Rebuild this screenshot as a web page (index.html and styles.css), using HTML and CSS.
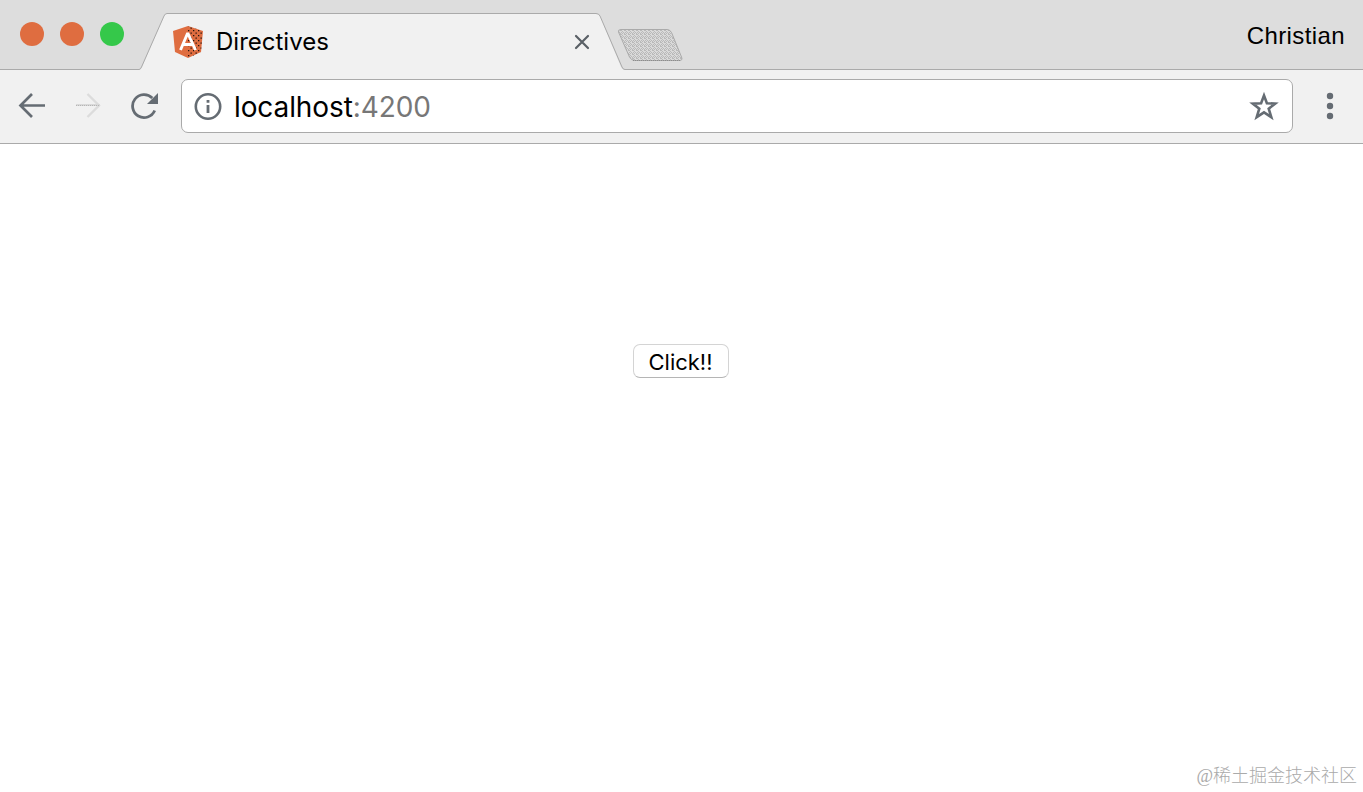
FILE: index.html
```html
<!DOCTYPE html>
<html lang="en">
<head>
    <meta charset="UTF-8">
    <title>Directives</title>
    <link rel="stylesheet" href="styles.css">
</head>
<body>
    <div class="tab-strip">
        <div class="window-buttons">
            <span class="dot"></span>
            <span class="dot"></span>
            <span class="dot green"></span>
        </div>
        <div class="tab">
            <svg class="tab-shape" width="486" height="58" viewBox="0 0 486 58">
                <path d="M0 56.5 Q2 56.5 3 54 L25 3 Q26 .5 28 .5 H456 Q459 .5 461 3 L482 54 Q483 56.5 486 56.5 V58 H0Z" fill="#f1f1f1"/>
                <path d="M0 56.5 Q1.500 56.500 2.500 54 L25 3 Q26 .5 28 .5 H457 Q460 .5 461 3 L483 54 Q484 56.5 486 56.5" fill="none" stroke="#aaa"/>
            </svg>
            <svg class="favicon" width="32" height="34" viewBox="0 0 32 34">
                <defs>
                    <pattern id="specks" width="5" height="5" patternUnits="userSpaceOnUse">
                        <path d="M1 0h1.300v1.300H1zM3.500 2.500h1.300v1.300H3.500z" fill="#26140e"/>
                    </pattern>
                </defs>
                <path d="M16 1 L31 6 L29 27 L16 33 L3 27 L1 6Z" fill="#df6d40"/>
                <path d="M16 1 L31 6 L29 27 L16 33Z" fill="url(#specks)"/>
                <path d="M8.500 25 L15.700 8 L23.500 25 M11.500 19.500 H20.500" fill="none" stroke="#fff" stroke-width="2.900" stroke-linejoin="bevel"/>
            </svg>
            <span class="tab-title">Directives</span>
            <svg class="close" width="16" height="16" viewBox="0 0 16 16">
                <path d="M2 2 L14 14 M14 2 L2 14" stroke="#5a6066" stroke-width="2.200" stroke-linecap="round"/>
            </svg>
        </div>
        <svg class="new-tab" width="68" height="34" viewBox="0 0 68 34">
            <defs>
                <pattern id="mesh" width="4" height="4" patternUnits="userSpaceOnUse">
                    <path d="M0 0h1v1H0zM2 0h1v1H2zM1 1h1v1H1zM0 2h1v1H0zM3 2h1v1H3zM1 3h1v1H1zM3 1h1v1H3z" fill="#b9b9b9"/>
                </pattern>
            </defs>
            <path d="M4 1.500 H50 Q53 1.500 54.500 4.500 L64.500 29 Q66 32.500 62.500 32.500 H18 Q14 32.500 12.500 29 L1.500 4 Q.8 1.500 4 1.500Z" fill="#dadada"/>
            <path d="M4 1.500 H50 Q53 1.500 54.500 4.500 L64.500 29 Q66 32.500 62.500 32.500 H18 Q14 32.500 12.500 29 L1.500 4 Q.8 1.500 4 1.500Z" fill="url(#mesh)" stroke="#aaa"/>
            <path d="M16 32.500 H63" stroke="#8c8c8c" stroke-dasharray="1 1"/>
        </svg>
        <span class="profile">Christian</span>
    </div>

    <div class="toolbar">
        <svg class="nav-icon" width="28" height="28" viewBox="0 0 28 28">
            <path d="M27 13.500 H3 M14 2 L2.500 13.500 L14 25" fill="none" stroke="#656c73" stroke-width="2.700"/>
        </svg>
        <svg class="nav-icon" width="28" height="28" viewBox="0 0 28 28">
            <path d="M13.500 2 L25 13.500 L13.500 25" fill="none" stroke="#dcdcdc" stroke-width="2.400"/>
            <path d="M2 13 H26" stroke="#d9d9d9" stroke-width="2"/>
            <path d="M2 13.500 H26" stroke="#b5b5b5" stroke-dasharray="1 1"/>
        </svg>
        <svg class="nav-icon" width="28" height="28" viewBox="0 0 28 28">
            <path d="M22.300 6 A11.500 11.500 0 1 0 24.700 18.500" fill="none" stroke="#656c73" stroke-width="2.800"/>
            <path d="M28 1 V12 H17Z" fill="#656c73"/>
        </svg>
        <div class="address-bar">
            <svg width="28" height="28" viewBox="0 0 28 28">
                <circle cx="14" cy="14.500" r="12.200" fill="none" stroke="#656c73" stroke-width="2.600"/>
                <path d="M12.600 8h2.800v2.800h-2.800zM12.600 13h2.800v8h-2.800z" fill="#656c73"/>
            </svg>
            <span class="url">localhost<span class="port">:4200</span></span>
            <svg class="star" width="30" height="30" viewBox="0 0 30 30">
                <path d="M15 4.500 L17.900 12.300 L26.200 12.600 L19.700 17.700 L22.300 26.200 L15 21.400 L7.700 26.200 L10.300 17.700 L3.800 12.600 L12.100 12.300Z" fill="none" stroke="#656c73" stroke-width="2.600"/>
            </svg>
        </div>
        <svg class="menu" width="8" height="28" viewBox="0 0 8 28">
            <g fill="#656c73">
                <circle cx="4" cy="4" r="3.200"/>
                <circle cx="4" cy="14" r="3.200"/>
                <circle cx="4" cy="24" r="3.200"/>
            </g>
        </svg>
    </div>

    <main class="page">
        <button class="click-button" type="button">Click!!</button>
        <span class="watermark">@稀土掘金技术社区</span>
    </main>
</body>
</html>
```
FILE: styles.css
```css
* {
    box-sizing: border-box;
}
body {
    margin: 0;
    height: 792px;
    display: flex;
    flex-direction: column;
    overflow: hidden;
    background-color: #fff;
    font-family: Inter, "Liberation Sans", sans-serif;
    color: #000;
}
svg {
    display: block;
    flex-shrink: 0;
}

/* Tab strip */
.tab-strip {
    height: 70px;
    display: flex;
    align-items: flex-start;
    background-color: #ddd;
    border-bottom: 1px solid #aaa;
}
.window-buttons {
    width: 139px;
    padding: 22px 0 0 20px;
    display: flex;
    gap: 16px;
}
.dot {
    width: 24px;
    height: 24px;
    border-radius: 50%;
    background-color: #df6d40;
}
.dot.green {
    background-color: #35c84a;
}
.tab {
    position: relative;
    width: 486px;
    height: 57px;
    margin-top: 13px;
    padding-left: 33px;
    display: flex;
    align-items: center;
}
.tab-shape {
    position: absolute;
    left: 0;
    top: 0;
}
.favicon, .tab-title, .close {
    position: relative;
}
.tab-title {
    margin-left: 12px;
    width: 358px;
    font-size: 24px;
}
.new-tab {
    margin: 28px 0 0 -8px;
}
.profile {
    margin: 22px 18px 0 auto;
    font-family: "Liberation Sans", Arial, sans-serif;
    font-size: 24px;
    letter-spacing: 0.4px;
    line-height: 28px;
}

/* Toolbar */
.toolbar {
    height: 74px;
    padding: 9px 29px 10px 18px;
    display: flex;
    align-items: center;
    background-color: #f1f1f1;
    border-bottom: 1px solid #aaa;
}
.nav-icon {
    margin-right: 28px;
}
.address-bar {
    flex: 1;
    height: 54px;
    margin-left: -5px;
    padding: 0 13px 0 12px;
    display: flex;
    align-items: center;
    background-color: #fff;
    border: 1px solid #aaa;
    border-radius: 7px;
}
.url {
    margin-left: 12px;
    padding-top: 2px;
    font-size: 28px;
    letter-spacing: -0.1px;
    line-height: 34px;
}
.port {
    color: #777;
}
.star {
    margin-left: auto;
}
.menu {
    margin-left: 33px;
}

/* Page content */
.page {
    flex: 1;
    padding: 200px 6px 3px 0;
    display: flex;
    flex-direction: column;
    justify-content: space-between;
    align-items: center;
}
.click-button {
    width: 96px;
    height: 34px;
    margin-left: 4px;
    padding: 2px 0 0;
    font-family: inherit;
    font-size: 22px;
    color: #000;
    background-color: #fff;
    border: 1px solid #d4d4d4;
    border-bottom-color: #b5b5b5;
    border-radius: 7px;
}
.watermark {
    align-self: flex-end;
    font-family: "Liberation Serif", "Noto Sans CJK SC", sans-serif;
    font-weight: 300;
    font-size: 18px;
    line-height: 26px;
    color: #aaa;
}
```
